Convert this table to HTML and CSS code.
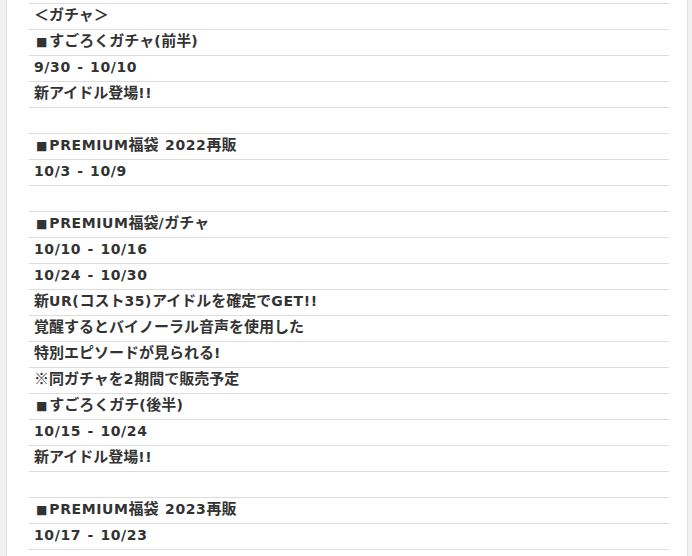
FILE: index.html
```html
<!DOCTYPE html>
<html lang="ja">
<head>
<meta charset="utf-8">
<link rel="stylesheet" href="styles.css">
</head>
<body>
<div class="frame">
  <div class="edge edge-left"></div>
  <div class="content">
    <table class="schedule">
      <tr><td>＜ガチャ＞</td></tr>
      <tr><td><span class="mark">■</span>すごろくガチャ<span class="en">(</span>前半<span class="en">)</span></td></tr>
      <tr><td><span class="en">9/30 - 10/10</span></td></tr>
      <tr><td>新アイドル登場<span class="en">!!</span></td></tr>
      <tr><td></td></tr>
      <tr><td><span class="mark">■</span><span class="en">PREMIUM</span>福袋<span class="en"> 2022</span>再販</td></tr>
      <tr><td><span class="en">10/3 - 10/9</span></td></tr>
      <tr><td></td></tr>
      <tr><td><span class="mark">■</span><span class="en">PREMIUM</span>福袋<span class="en">/</span>ガチャ</td></tr>
      <tr><td><span class="en">10/10 - 10/16</span></td></tr>
      <tr><td><span class="en">10/24 - 10/30</span></td></tr>
      <tr><td>新<span class="en">UR(</span>コスト<span class="en">35)</span>アイドルを確定で<span class="en">GET!!</span></td></tr>
      <tr><td>覚醒するとバイノーラル音声を使用した</td></tr>
      <tr><td>特別エピソードが見られる<span class="en">!</span></td></tr>
      <tr><td>※同ガチャを<span class="en">2</span>期間で販売予定</td></tr>
      <tr><td><span class="mark">■</span>すごろくガチ<span class="en">(</span>後半<span class="en">)</span></td></tr>
      <tr><td><span class="en">10/15 - 10/24</span></td></tr>
      <tr><td>新アイドル登場<span class="en">!!</span></td></tr>
      <tr><td></td></tr>
      <tr><td><span class="mark">■</span><span class="en">PREMIUM</span>福袋<span class="en"> 2023</span>再販</td></tr>
      <tr><td><span class="en">10/17 - 10/23</span></td></tr>
    </table>
  </div>
  <div class="edge edge-right"></div>
</div>
</body>
</html>
```
FILE: styles.css
```css
html, body {
  margin: 0;
  padding: 0;
  background: #fff;
}
.frame {
  display: flex;
  width: 692px;
  height: 556px;
  overflow: hidden;
}
.edge {
  flex: 0 0 auto;
  background: #f0f0f0;
}
.edge-left {
  width: 6px;
  border-right: 1px solid #e0e0e0;
}
.edge-right {
  width: 4px;
  border-left: 1px solid #e0e0e0;
  margin-left: auto;
}
.content {
  padding: 3px 0 0 22px;
}
.schedule {
  border-collapse: collapse;
  width: 640px;
  font-family: "Noto Sans CJK JP", sans-serif;
  font-weight: bold;
  font-size: 15px;
  color: #333;
}
.schedule td {
  border-top: 1px solid #dddddd;
  border-bottom: 1px solid #dddddd;
  height: 20px;
  padding: 0 5px 5px;
  line-height: 20px;
  white-space: pre;
}
.en {
  font-family: "DejaVu Sans", sans-serif;
  font-size: 14px;
  line-height: 14px;
  letter-spacing: 0.6px;
  word-spacing: 1px;
}
.mark {
  font-family: "DejaVu Sans", sans-serif;
  font-size: 12px;
  line-height: 12px;
  margin-left: 2px;
  margin-right: 2px;
}
```
